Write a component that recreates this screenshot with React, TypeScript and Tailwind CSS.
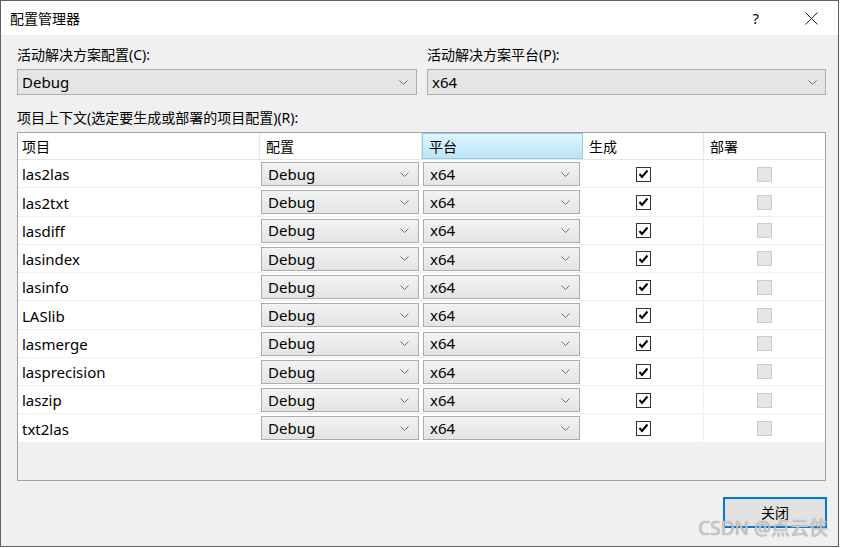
import React from 'react';

const projects = ['las2las', 'las2txt', 'lasdiff', 'lasindex', 'lasinfo', 'LASlib', 'lasmerge', 'lasprecision', 'laszip', 'txt2las'];

function Chevron({ className = '' }: { className?: string }) {
  return (
    <svg width="9" height="5" viewBox="0 0 9 5" className={className}>
      <polyline points="0.5,0.5 4.5,4.5 8.5,0.5" fill="none" stroke="#707070" strokeWidth="1" />
    </svg>
  );
}

function Combo({ value }: { value: string }) {
  return (
    <div className="flex h-[26px] items-center justify-between border border-[#adadad] bg-[#e5e5e5] pl-[4px] pr-[8px] text-[15px] text-black">
      <span>{value}</span>
      <Chevron />
    </div>
  );
}

function CellCombo({ value }: { value: string }) {
  return (
    <div className="flex h-[24px] items-center justify-between border border-[#acacac] bg-gradient-to-b from-[#f3f3f3] to-[#e4e4e4] pl-[6px] pr-[9px] text-[15px] text-black">
      <span>{value}</span>
      <Chevron />
    </div>
  );
}

function CheckBox({ checked, disabled }: { checked?: boolean; disabled?: boolean }) {
  if (disabled) {
    return <div className="h-[15px] w-[15px] border border-[#cccccc] bg-[#e6e6e6]" />;
  }
  return (
    <div className="flex h-[15px] w-[15px] items-center justify-center border border-[#333333] bg-white">
      {checked && (
        <svg width="11" height="10" viewBox="0 0 11 10">
          <polyline points="1.5,5 4,8 9.5,1.5" fill="none" stroke="#000" strokeWidth="2" />
        </svg>
      )}
    </div>
  );
}

export default function App() {
  return (
    <div className="h-[548px] w-[842px] bg-white" style={{ fontFamily: '"Noto Sans", "Noto Sans CJK SC", sans-serif' }}>
      <div className="relative flex h-[547px] w-[839px] flex-col border border-[#5f5f5f]">
        {/* title bar */}
        <div className="flex h-[34px] items-center bg-white pl-[9px] text-[14px] text-black">
          <span className="flex-1">配置管理器</span>
          <span className="mr-[46px] text-[15px]">?</span>
          <svg width="13" height="13" viewBox="0 0 13 13" className="mr-[20px]">
            <path d="M0.5 0.5 L12.5 12.5 M12.5 0.5 L0.5 12.5" stroke="#222" strokeWidth="1" />
          </svg>
        </div>

        <div className="flex flex-1 flex-col bg-[#f0f0f0] pl-[16px] pr-[11px] pt-[10px]">
          <div className="flex gap-[10px]">
            <div className="w-[400px] shrink-0">
              <div className="h-[20px] text-[14px] leading-[20px] text-black">活动解决方案配置(C):</div>
              <div className="mt-[4px]">
                <Combo value="Debug" />
              </div>
            </div>
            <div className="w-[399px] shrink-0">
              <div className="h-[20px] text-[14px] leading-[20px] text-black">活动解决方案平台(P):</div>
              <div className="mt-[4px]">
                <Combo value="x64" />
              </div>
            </div>
          </div>

          <div className="mt-[13px] h-[20px] text-[14px] leading-[20px] text-black">项目上下文(选定要生成或部署的项目配置)(R):</div>

          {/* grid */}
          <div className="mt-[4px] flex h-[349px] w-[809px] flex-col border border-[#a0a0a0] bg-[#f0f0f0]">
            <div className="grid h-[27px] shrink-0 grid-cols-[242px_162px_161px_121px_121px] border-b border-[#e5e5e5] bg-white text-[14px] text-black">
              <div className="flex items-center border-r border-[#e5e5e5] pl-[4px]">项目</div>
              <div className="flex items-center border-r border-[#e5e5e5] pl-[6px]">配置</div>
              <div className="flex items-center border border-[#8fcdea] bg-gradient-to-b from-[#dff5fd] to-[#b9e5f8] pl-[6px]">平台</div>
              <div className="flex items-center border-r border-[#e5e5e5] pl-[6px]">生成</div>
              <div className="flex items-center pl-[6px]">部署</div>
            </div>
            {projects.map((p) => (
              <div key={p} className="grid h-[28.25px] shrink-0 grid-cols-[242px_162px_161px_121px_121px] border-b border-[#f0f0f0] bg-white text-[15px] text-black">
                <div className="flex items-center pl-[4px] pt-[2px]">{p}</div>
                <div className="pl-[1px] pr-[3px] pt-[2px]">
                  <CellCombo value="Debug" />
                </div>
                <div className="pl-[1px] pr-[3px] pt-[2px]">
                  <CellCombo value="x64" />
                </div>
                <div className="flex items-center justify-center border-r border-[#f0f0f0] pt-[1px]">
                  <CheckBox checked />
                </div>
                <div className="flex items-center justify-center pt-[1px]">
                  <CheckBox disabled />
                </div>
              </div>
            ))}
          </div>

          <div className="mt-[16px] flex justify-end">
            <button className="flex h-[31px] w-[104px] items-center justify-center border-2 border-[#0078d7] bg-[#e1e1e1] text-[14px] text-black">
              关闭
            </button>
          </div>
        </div>

        <div
          className="absolute right-[10px] bottom-[8px] text-[19px] leading-[20px] text-[#c9c9c9]"
          style={{ textShadow: '0 0 1px #8a8a8a' }}
        >
          CSDN @点云侠
        </div>
      </div>
    </div>
  );
}
